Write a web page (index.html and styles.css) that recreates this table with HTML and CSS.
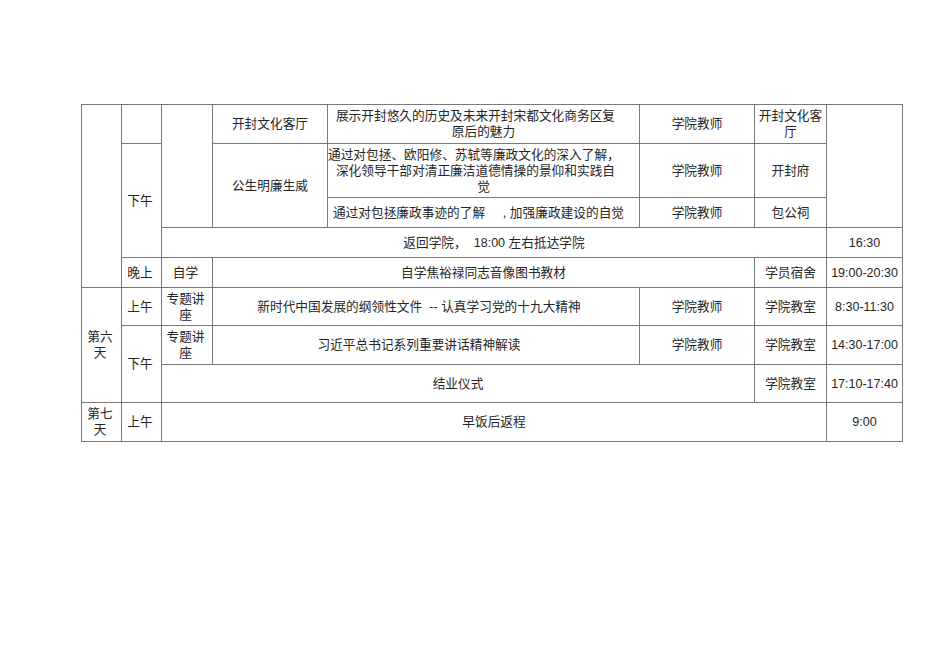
FILE: index.html
```html
<!DOCTYPE html>
<html lang="zh">
<head>
<meta charset="utf-8">
<title>日程表</title>
<link rel="stylesheet" href="styles.css">
</head>
<body>
<div class="page">
<table class="sched">
<colgroup>
<col class="c1"><col class="c2"><col class="c3"><col class="c4"><col class="c5"><col class="c6"><col class="c7"><col class="c8">
</colgroup>
<tbody>
<tr class="r1">
<td rowspan="5" class="nar"></td>
<td class="nar"></td>
<td rowspan="3" class="nar"></td>
<td>开封文化客厅</td>
<td class="long"><span class="ln sh">展示开封悠久的历史及未来开封宋都文化商务区复</span><span class="ln">原后的魅力</span></td>
<td>学院教师</td>
<td>开封文化客厅</td>
<td rowspan="3"></td>
</tr>
<tr class="r2">
<td rowspan="3" class="nar">下午</td>
<td rowspan="2">公生明廉生威</td>
<td class="long"><span class="ln sh2">通过对包拯、欧阳修、苏轼等廉政文化的深入了解，</span><span class="ln sh">深化领导干部对清正廉洁道德情操的景仰和实践自</span><span class="ln">觉</span></td>
<td>学院教师</td>
<td>开封府</td>
</tr>
<tr class="r3">
<td class="long"><span class="ln sh3">通过对包拯廉政事迹的了解&nbsp;&nbsp;&nbsp;&nbsp;&nbsp;,&nbsp;加强廉政建设的自觉</span></td>
<td>学院教师</td>
<td>包公祠</td>
</tr>
<tr class="r4">
<td colspan="5">返回学院， &nbsp;<span class="lat">18:00</span> 左右抵达学院</td>
<td class="lat">16:30</td>
</tr>
<tr class="r5">
<td class="nar">晚上</td>
<td class="nar">自学</td>
<td colspan="3">自学焦裕禄同志音像图书教材</td>
<td>学员宿舍</td>
<td class="lat">19:00-20:30</td>
</tr>
<tr class="r6">
<td rowspan="3" class="nar">第六天</td>
<td class="nar">上午</td>
<td class="nar">专题讲座</td>
<td colspan="2" class="lft">新时代中国发展的纲领性文件 &nbsp;<span class="lat">--</span> 认真学习党的十九大精神</td>
<td>学院教师</td>
<td>学院教室</td>
<td class="lat">8:30-11:30</td>
</tr>
<tr class="r7">
<td rowspan="2" class="nar">下午</td>
<td class="nar">专题讲座</td>
<td colspan="2" class="lft">习近平总书记系列重要讲话精神解读</td>
<td>学院教师</td>
<td>学院教室</td>
<td class="lat">14:30-17:00</td>
</tr>
<tr class="r8">
<td colspan="4">结业仪式</td>
<td>学院教室</td>
<td class="lat">17:10-17:40</td>
</tr>
<tr class="r9">
<td class="nar">第七天</td>
<td class="nar">上午</td>
<td colspan="5">早饭后返程</td>
<td class="lat">9:00</td>
</tr>
</tbody>
</table>
</div>
</body>
</html>
```
FILE: styles.css
```css
html, body {
  margin: 0;
  padding: 0;
  background: #ffffff;
}

.page {
  padding: 104px 0 0 81px;
}

.sched {
  border-collapse: collapse;
  table-layout: fixed;
  width: 821px;
  font-family: "Liberation Sans", "Noto Sans CJK SC", sans-serif;
  font-size: 12.7px;
  line-height: 16px;
  color: #262626;
}

.sched td {
  border: 1px solid #7a7a7a;
  padding: 0 2px;
  text-align: center;
  vertical-align: middle;
  overflow: visible;
  white-space: normal;
}

.sched td.nar {
  padding: 0 4px 0 1px;
}

.sched td.long {
  padding: 0;
  white-space: nowrap;
}

.sched td.lft {
  padding: 0 16px 0 2px;
}

.ln {
  display: block;
}

.sh {
  margin-right: 16px;
}

.sh2 {
  margin-right: 22px;
}

.sh3 {
  margin-right: 10px;
}

.lat {
  font-family: "Liberation Sans", Arial, sans-serif;
  font-size: 12.5px;
}

.c1 { width: 40px; }
.c2 { width: 40px; }
.c3 { width: 51px; }
.c4 { width: 115px; }
.c5 { width: 312px; }
.c6 { width: 115px; }
.c7 { width: 72px; }
.c8 { width: 76px; }

.r1 { height: 39px; }
.r2 { height: 54px; }
.r3 { height: 30px; }
.r4 { height: 30px; }
.r5 { height: 30px; }
.r6 { height: 38px; }
.r7 { height: 39px; }
.r8 { height: 38px; }
.r9 { height: 39px; }
```
